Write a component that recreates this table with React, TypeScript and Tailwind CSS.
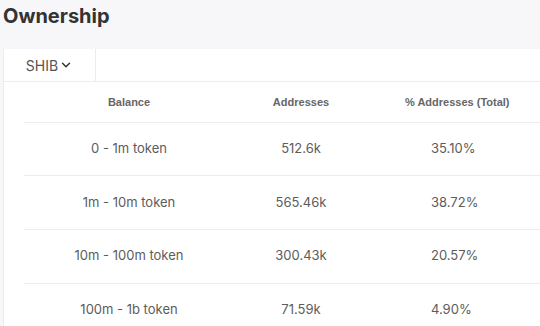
import React from 'react';
import { ChevronDown } from 'lucide-react';

const rows = [
  { balance: '0 - 1m token', addresses: '512.6k', pct: '35.10%' },
  { balance: '1m - 10m token', addresses: '565.46k', pct: '38.72%' },
  { balance: '10m - 100m token', addresses: '300.43k', pct: '20.57%' },
  { balance: '100m - 1b token', addresses: '71.59k', pct: '4.90%' },
];

const App: React.FC = () => {
  return (
    <div className="h-[326px] w-[540px] overflow-hidden bg-[#f7f7f9] font-['Inter',sans-serif]">
      <h2 className="h-[49px] pl-[3px] pt-[3px] text-[20px] font-bold leading-[26px] text-[#333]">Ownership</h2>
      <div className="ml-[3px] w-[560px] border-l border-[#ececec] bg-white">
        <div className="flex h-[33px] border-b border-[#ececec]">
          <button className="flex w-[92px] items-center justify-center border-r border-[#ececec] text-[14px] text-[#555]">
            SHIB
            <ChevronDown size={14} strokeWidth={2.5} className="ml-[1px] text-[#333]" />
          </button>
        </div>
        <table className="ml-[20px] w-[540px] border-collapse">
          <thead>
            <tr className="h-[40px] border-b border-[#ececec] font-['Liberation_Sans',sans-serif] text-[11px] font-bold text-[#666]">
              <th className="w-[210px] text-center">Balance</th>
              <th className="w-[134px] text-center">Addresses</th>
              <th className="text-left pl-[37px]">% Addresses (Total)</th>
            </tr>
          </thead>
          <tbody>
            {rows.map((r) => (
              <tr key={r.balance} className="h-[53.7px] border-b border-[#ececec] text-[13px] text-[#5c5c5c]">
                <td className="text-center">{r.balance}</td>
                <td className="text-center">{r.addresses}</td>
                <td className="text-left pl-[63px]">{r.pct}</td>
              </tr>
            ))}
          </tbody>
        </table>
      </div>
    </div>
  );
};

export default App;
